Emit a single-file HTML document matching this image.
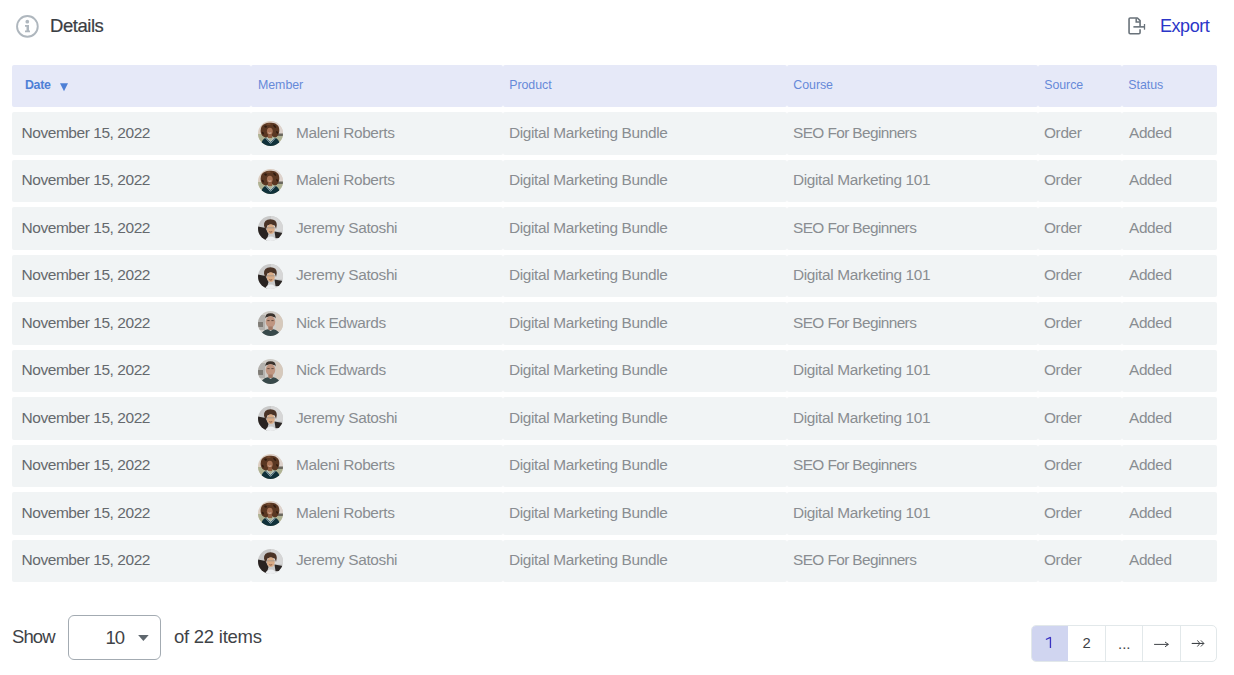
<!DOCTYPE html><html><head><meta charset="utf-8"><style>
*{box-sizing:border-box;margin:0;padding:0}
html,body{width:1234px;height:675px;overflow:hidden;background:#fff;font-family:"Liberation Sans",sans-serif}
.a{position:absolute}
.cell{position:absolute;border-radius:2px}
.h{background:#e6e9f8}
.r{background:#f1f4f5}
.t{position:absolute;white-space:nowrap;line-height:1}
.av{position:absolute;width:25px;height:25px;border-radius:50%;overflow:hidden}
</style></head><body>
<svg class="a" style="left:14px;top:13px" width="27" height="27" viewBox="0 0 27 27"><circle cx="13.4" cy="13.4" r="10.35" fill="none" stroke="#afb7be" stroke-width="1.9"/><circle cx="13.3" cy="8.7" r="1.85" fill="#afb7be"/><path d="M11.0 12.0 H15.0 V17.4 H16.0 V19.3 H11.0 V17.4 H12.5 V13.7 H11.0Z" fill="#afb7be"/></svg>
<div class="t" style="left:50px;top:17.27px;font-size:18.5px;color:#3b3e43;letter-spacing:-0.45px;-webkit-text-stroke:0.2px #3b3e43">Details</div>
<svg class="a" style="left:1124px;top:13px" width="24" height="24" viewBox="0 0 24 24"><path d="M16.07 13.87 V7.6 L13.4 5.0 H6.15 Q5.05 5.0 5.05 6.1 V19.6 Q5.05 20.7 6.15 20.7 H14.97 Q16.07 20.7 16.07 19.6 V16.3" fill="none" stroke="#69727a" stroke-width="1.6" stroke-linejoin="round"/><path d="M12.2 5.2 V8.9 H15.9" fill="none" stroke="#69727a" stroke-width="1.5"/><path d="M9.4 13.87 H20.4" fill="none" stroke="#69727a" stroke-width="1.6"/><path d="M20.5 11.0 V16.7" fill="none" stroke="#69727a" stroke-width="1.3"/></svg>
<div class="t" style="left:1160px;top:16.7px;font-size:18px;color:#2b36c8;letter-spacing:-0.45px">Export</div>
<div class="cell h" style="left:12px;top:65px;width:239px;height:42px"></div>
<div class="cell h" style="left:251px;top:65px;width:251.8px;height:42px"></div>
<div class="cell h" style="left:502.8px;top:65px;width:284.09999999999997px;height:42px"></div>
<div class="cell h" style="left:786.9px;top:65px;width:250.89999999999998px;height:42px"></div>
<div class="cell h" style="left:1037.8px;top:65px;width:84.10000000000014px;height:42px"></div>
<div class="cell h" style="left:1121.9px;top:65px;width:95.09999999999991px;height:42px"></div>
<div class="t" style="left:25px;top:79.46px;font-size:12.4px;color:#4e80d6;letter-spacing:-0.35px;font-weight:700">Date</div>
<svg class="a" style="left:59px;top:82px" width="10" height="10" viewBox="0 0 10 10"><path d="M1 1.3 H9 L5 9.3Z" fill="#4e80d6"/></svg>
<div class="t" style="left:258px;top:79.46px;font-size:12.4px;color:#6689d8;letter-spacing:-0.05px">Member</div>
<div class="t" style="left:509.2px;top:79.46px;font-size:12.4px;color:#6689d8;letter-spacing:-0.05px">Product</div>
<div class="t" style="left:793.3px;top:79.46px;font-size:12.4px;color:#6689d8;letter-spacing:-0.05px">Course</div>
<div class="t" style="left:1044.2px;top:79.46px;font-size:12.4px;color:#6689d8;letter-spacing:-0.05px">Source</div>
<div class="t" style="left:1128.3px;top:79.46px;font-size:12.4px;color:#6689d8;letter-spacing:-0.05px">Status</div>
<div class="cell r" style="left:12px;top:112px;width:239px;height:43px"></div>
<div class="cell r" style="left:251px;top:112px;width:251.8px;height:43px"></div>
<div class="cell r" style="left:502.8px;top:112px;width:284.1px;height:43px"></div>
<div class="cell r" style="left:786.9px;top:112px;width:250.9px;height:43px"></div>
<div class="cell r" style="left:1037.8px;top:112px;width:84.1px;height:43px"></div>
<div class="cell r" style="left:1121.9px;top:112px;width:95.1px;height:43px"></div>
<div class="t" style="left:21.5px;top:124.83px;font-size:15.5px;color:#65696d;letter-spacing:-0.45px">November 15, 2022</div>
<div class="av" style="left:258px;top:121.3px"><svg width="25" height="25" viewBox="0 0 25 25"><rect width="25" height="25" fill="#dccdc0"/><path d="M14 0 H25 V14 H14Z" fill="#ddd2cc"/><path d="M0 13 H25 V25 H0Z" fill="#aeb293"/><path d="M18 12.5 H25 V15 H18Z" fill="#6a675e"/><path d="M11 1.8 Q17.5 1 20.3 5 Q22.3 9 20.5 13.5 Q19.3 16.5 16 16.3 L12.8 14.5 L8 16.5 Q2.8 15.5 2.6 10 Q2.7 4 7 2.8 Q9 1.9 11 1.8Z" fill="#5a3722"/><path d="M6 5 Q8 3.8 9.2 6 Q7 8 6 5Z M15 3.8 Q18.3 4 18.2 7 Q16 7 15 3.8Z M3.8 11 Q6 10 6 13.5 Q3.8 13.5 3.8 11Z M18 10 Q20.5 10 20 13 Q18 12.5 18 10Z" fill="#2f1b10"/><path d="M8 3 Q11 2 13 3 Q11 4 8 3Z" fill="#8d5d3c"/><ellipse cx="11.8" cy="10.3" rx="2.9" ry="3.5" fill="#a97457"/><path d="M10.3 11.8 Q11.8 12.8 13.3 11.8" stroke="#e8d8cc" stroke-width="0.7" fill="none"/><path d="M10 13.3 H14 V17 H10Z" fill="#915f44"/><path d="M3 25 Q3.5 18.3 8 16.6 L12.5 20.8 L17 16.6 Q21.5 18.3 22 25Z" fill="#10313a"/><path d="M7.6 17 L12.5 22.3 L17.4 17 M9.2 16.8 L12.5 20.5 L15.8 16.8" stroke="#c8d8de" stroke-width="0.85" fill="none"/></svg></div>
<div class="t" style="left:296px;top:124.91px;font-size:15.4px;color:#898d91;letter-spacing:-0.35px">Maleni Roberts</div>
<div class="t" style="left:509px;top:124.91px;font-size:15.4px;color:#898d91;letter-spacing:-0.35px">Digital Marketing Bundle</div>
<div class="t" style="left:793px;top:124.91px;font-size:15.4px;color:#898d91;letter-spacing:-0.6px">SEO For Beginners</div>
<div class="t" style="left:1044px;top:124.91px;font-size:15.4px;color:#898d91;letter-spacing:-0.35px">Order</div>
<div class="t" style="left:1129px;top:124.91px;font-size:15.4px;color:#898d91;letter-spacing:-0.35px">Added</div>
<div class="cell r" style="left:12px;top:160px;width:239px;height:42px"></div>
<div class="cell r" style="left:251px;top:160px;width:251.8px;height:42px"></div>
<div class="cell r" style="left:502.8px;top:160px;width:284.1px;height:42px"></div>
<div class="cell r" style="left:786.9px;top:160px;width:250.9px;height:42px"></div>
<div class="cell r" style="left:1037.8px;top:160px;width:84.1px;height:42px"></div>
<div class="cell r" style="left:1121.9px;top:160px;width:95.1px;height:42px"></div>
<div class="t" style="left:21.5px;top:171.82px;font-size:15.5px;color:#65696d;letter-spacing:-0.45px">November 15, 2022</div>
<div class="av" style="left:258px;top:168.8px"><svg width="25" height="25" viewBox="0 0 25 25"><rect width="25" height="25" fill="#dccdc0"/><path d="M14 0 H25 V14 H14Z" fill="#ddd2cc"/><path d="M0 13 H25 V25 H0Z" fill="#aeb293"/><path d="M18 12.5 H25 V15 H18Z" fill="#6a675e"/><path d="M11 1.8 Q17.5 1 20.3 5 Q22.3 9 20.5 13.5 Q19.3 16.5 16 16.3 L12.8 14.5 L8 16.5 Q2.8 15.5 2.6 10 Q2.7 4 7 2.8 Q9 1.9 11 1.8Z" fill="#5a3722"/><path d="M6 5 Q8 3.8 9.2 6 Q7 8 6 5Z M15 3.8 Q18.3 4 18.2 7 Q16 7 15 3.8Z M3.8 11 Q6 10 6 13.5 Q3.8 13.5 3.8 11Z M18 10 Q20.5 10 20 13 Q18 12.5 18 10Z" fill="#2f1b10"/><path d="M8 3 Q11 2 13 3 Q11 4 8 3Z" fill="#8d5d3c"/><ellipse cx="11.8" cy="10.3" rx="2.9" ry="3.5" fill="#a97457"/><path d="M10.3 11.8 Q11.8 12.8 13.3 11.8" stroke="#e8d8cc" stroke-width="0.7" fill="none"/><path d="M10 13.3 H14 V17 H10Z" fill="#915f44"/><path d="M3 25 Q3.5 18.3 8 16.6 L12.5 20.8 L17 16.6 Q21.5 18.3 22 25Z" fill="#10313a"/><path d="M7.6 17 L12.5 22.3 L17.4 17 M9.2 16.8 L12.5 20.5 L15.8 16.8" stroke="#c8d8de" stroke-width="0.85" fill="none"/></svg></div>
<div class="t" style="left:296px;top:171.91px;font-size:15.4px;color:#898d91;letter-spacing:-0.35px">Maleni Roberts</div>
<div class="t" style="left:509px;top:171.91px;font-size:15.4px;color:#898d91;letter-spacing:-0.35px">Digital Marketing Bundle</div>
<div class="t" style="left:793px;top:171.91px;font-size:15.4px;color:#898d91;letter-spacing:-0.35px">Digital Marketing 101</div>
<div class="t" style="left:1044px;top:171.91px;font-size:15.4px;color:#898d91;letter-spacing:-0.35px">Order</div>
<div class="t" style="left:1129px;top:171.91px;font-size:15.4px;color:#898d91;letter-spacing:-0.35px">Added</div>
<div class="cell r" style="left:12px;top:207px;width:239px;height:43px"></div>
<div class="cell r" style="left:251px;top:207px;width:251.8px;height:43px"></div>
<div class="cell r" style="left:502.8px;top:207px;width:284.1px;height:43px"></div>
<div class="cell r" style="left:786.9px;top:207px;width:250.9px;height:43px"></div>
<div class="cell r" style="left:1037.8px;top:207px;width:84.1px;height:43px"></div>
<div class="cell r" style="left:1121.9px;top:207px;width:95.1px;height:43px"></div>
<div class="t" style="left:21.5px;top:219.82px;font-size:15.5px;color:#65696d;letter-spacing:-0.45px">November 15, 2022</div>
<div class="av" style="left:258px;top:216.3px"><svg width="25" height="25" viewBox="0 0 25 25"><rect width="25" height="25" fill="#c9c9c9"/><path d="M13 0 H25 V15 H13Z" fill="#d6d6d6"/><path d="M0 10.5 L7.5 12 L10.5 18 L8.5 25 H0Z" fill="#292321"/><path d="M16.5 15.5 L25 17 L25 22.5 L17.5 22Z" fill="#2b2624"/><path d="M6 9.5 Q5.5 3.5 12.5 3.2 Q19 3.5 18.8 9 L18 13 L16.8 9.5 Q13 8 9.5 9.2 L8 13.5 Q6.3 12 6 9.5Z" fill="#4a3326"/><ellipse cx="12.8" cy="13.2" rx="3.9" ry="4.9" fill="#d9ab86"/><path d="M9 11.8 H16.8" stroke="#9a948c" stroke-width="0.8"/><path d="M11.3 15.6 Q12.8 16.6 14.2 15.6" stroke="#7a4a35" stroke-width="0.8" fill="none"/><path d="M7 25 Q8.5 20.5 12.8 20.5 Q17 20.5 18.5 25Z" fill="#eceef0"/></svg></div>
<div class="t" style="left:296px;top:219.91px;font-size:15.4px;color:#898d91;letter-spacing:-0.35px">Jeremy Satoshi</div>
<div class="t" style="left:509px;top:219.91px;font-size:15.4px;color:#898d91;letter-spacing:-0.35px">Digital Marketing Bundle</div>
<div class="t" style="left:793px;top:219.91px;font-size:15.4px;color:#898d91;letter-spacing:-0.6px">SEO For Beginners</div>
<div class="t" style="left:1044px;top:219.91px;font-size:15.4px;color:#898d91;letter-spacing:-0.35px">Order</div>
<div class="t" style="left:1129px;top:219.91px;font-size:15.4px;color:#898d91;letter-spacing:-0.35px">Added</div>
<div class="cell r" style="left:12px;top:255px;width:239px;height:42px"></div>
<div class="cell r" style="left:251px;top:255px;width:251.8px;height:42px"></div>
<div class="cell r" style="left:502.8px;top:255px;width:284.1px;height:42px"></div>
<div class="cell r" style="left:786.9px;top:255px;width:250.9px;height:42px"></div>
<div class="cell r" style="left:1037.8px;top:255px;width:84.1px;height:42px"></div>
<div class="cell r" style="left:1121.9px;top:255px;width:95.1px;height:42px"></div>
<div class="t" style="left:21.5px;top:266.82px;font-size:15.5px;color:#65696d;letter-spacing:-0.45px">November 15, 2022</div>
<div class="av" style="left:258px;top:263.8px"><svg width="25" height="25" viewBox="0 0 25 25"><rect width="25" height="25" fill="#c9c9c9"/><path d="M13 0 H25 V15 H13Z" fill="#d6d6d6"/><path d="M0 10.5 L7.5 12 L10.5 18 L8.5 25 H0Z" fill="#292321"/><path d="M16.5 15.5 L25 17 L25 22.5 L17.5 22Z" fill="#2b2624"/><path d="M6 9.5 Q5.5 3.5 12.5 3.2 Q19 3.5 18.8 9 L18 13 L16.8 9.5 Q13 8 9.5 9.2 L8 13.5 Q6.3 12 6 9.5Z" fill="#4a3326"/><ellipse cx="12.8" cy="13.2" rx="3.9" ry="4.9" fill="#d9ab86"/><path d="M9 11.8 H16.8" stroke="#9a948c" stroke-width="0.8"/><path d="M11.3 15.6 Q12.8 16.6 14.2 15.6" stroke="#7a4a35" stroke-width="0.8" fill="none"/><path d="M7 25 Q8.5 20.5 12.8 20.5 Q17 20.5 18.5 25Z" fill="#eceef0"/></svg></div>
<div class="t" style="left:296px;top:266.91px;font-size:15.4px;color:#898d91;letter-spacing:-0.35px">Jeremy Satoshi</div>
<div class="t" style="left:509px;top:266.91px;font-size:15.4px;color:#898d91;letter-spacing:-0.35px">Digital Marketing Bundle</div>
<div class="t" style="left:793px;top:266.91px;font-size:15.4px;color:#898d91;letter-spacing:-0.35px">Digital Marketing 101</div>
<div class="t" style="left:1044px;top:266.91px;font-size:15.4px;color:#898d91;letter-spacing:-0.35px">Order</div>
<div class="t" style="left:1129px;top:266.91px;font-size:15.4px;color:#898d91;letter-spacing:-0.35px">Added</div>
<div class="cell r" style="left:12px;top:302px;width:239px;height:43px"></div>
<div class="cell r" style="left:251px;top:302px;width:251.8px;height:43px"></div>
<div class="cell r" style="left:502.8px;top:302px;width:284.1px;height:43px"></div>
<div class="cell r" style="left:786.9px;top:302px;width:250.9px;height:43px"></div>
<div class="cell r" style="left:1037.8px;top:302px;width:84.1px;height:43px"></div>
<div class="cell r" style="left:1121.9px;top:302px;width:95.1px;height:43px"></div>
<div class="t" style="left:21.5px;top:314.82px;font-size:15.5px;color:#65696d;letter-spacing:-0.45px">November 15, 2022</div>
<div class="av" style="left:258px;top:311.3px"><svg width="25" height="25" viewBox="0 0 25 25"><rect width="25" height="25" fill="#cfccc7"/><path d="M0 4 H7 V19 H0Z" fill="#b3b1ad"/><path d="M0 11 H5 V16 H0Z" fill="#7f7c76"/><path d="M18 3 H25 V20 H18Z" fill="#d6c9bc"/><path d="M7.3 7.5 Q7 2.3 12.5 2.3 Q18 2.3 17.7 7.5 L16.8 6.2 Q12.5 4.6 8.2 6.2Z" fill="#3a322c"/><ellipse cx="12.5" cy="10.8" rx="4.8" ry="5.8" fill="#bf9580"/><path d="M9.3 9.6 H11.6 M13.4 9.6 H15.7" stroke="#5a4438" stroke-width="0.9"/><path d="M10.3 15.5 H14.8 V19 H10.3Z" fill="#a27a66"/><path d="M2.5 25 Q4 19.5 9.8 18.3 L12.6 20 L15.4 18.3 Q21 19.5 22.5 25Z" fill="#38494a"/></svg></div>
<div class="t" style="left:296px;top:314.91px;font-size:15.4px;color:#898d91;letter-spacing:-0.35px">Nick Edwards</div>
<div class="t" style="left:509px;top:314.91px;font-size:15.4px;color:#898d91;letter-spacing:-0.35px">Digital Marketing Bundle</div>
<div class="t" style="left:793px;top:314.91px;font-size:15.4px;color:#898d91;letter-spacing:-0.6px">SEO For Beginners</div>
<div class="t" style="left:1044px;top:314.91px;font-size:15.4px;color:#898d91;letter-spacing:-0.35px">Order</div>
<div class="t" style="left:1129px;top:314.91px;font-size:15.4px;color:#898d91;letter-spacing:-0.35px">Added</div>
<div class="cell r" style="left:12px;top:350px;width:239px;height:42px"></div>
<div class="cell r" style="left:251px;top:350px;width:251.8px;height:42px"></div>
<div class="cell r" style="left:502.8px;top:350px;width:284.1px;height:42px"></div>
<div class="cell r" style="left:786.9px;top:350px;width:250.9px;height:42px"></div>
<div class="cell r" style="left:1037.8px;top:350px;width:84.1px;height:42px"></div>
<div class="cell r" style="left:1121.9px;top:350px;width:95.1px;height:42px"></div>
<div class="t" style="left:21.5px;top:361.82px;font-size:15.5px;color:#65696d;letter-spacing:-0.45px">November 15, 2022</div>
<div class="av" style="left:258px;top:358.8px"><svg width="25" height="25" viewBox="0 0 25 25"><rect width="25" height="25" fill="#cfccc7"/><path d="M0 4 H7 V19 H0Z" fill="#b3b1ad"/><path d="M0 11 H5 V16 H0Z" fill="#7f7c76"/><path d="M18 3 H25 V20 H18Z" fill="#d6c9bc"/><path d="M7.3 7.5 Q7 2.3 12.5 2.3 Q18 2.3 17.7 7.5 L16.8 6.2 Q12.5 4.6 8.2 6.2Z" fill="#3a322c"/><ellipse cx="12.5" cy="10.8" rx="4.8" ry="5.8" fill="#bf9580"/><path d="M9.3 9.6 H11.6 M13.4 9.6 H15.7" stroke="#5a4438" stroke-width="0.9"/><path d="M10.3 15.5 H14.8 V19 H10.3Z" fill="#a27a66"/><path d="M2.5 25 Q4 19.5 9.8 18.3 L12.6 20 L15.4 18.3 Q21 19.5 22.5 25Z" fill="#38494a"/></svg></div>
<div class="t" style="left:296px;top:361.91px;font-size:15.4px;color:#898d91;letter-spacing:-0.35px">Nick Edwards</div>
<div class="t" style="left:509px;top:361.91px;font-size:15.4px;color:#898d91;letter-spacing:-0.35px">Digital Marketing Bundle</div>
<div class="t" style="left:793px;top:361.91px;font-size:15.4px;color:#898d91;letter-spacing:-0.35px">Digital Marketing 101</div>
<div class="t" style="left:1044px;top:361.91px;font-size:15.4px;color:#898d91;letter-spacing:-0.35px">Order</div>
<div class="t" style="left:1129px;top:361.91px;font-size:15.4px;color:#898d91;letter-spacing:-0.35px">Added</div>
<div class="cell r" style="left:12px;top:397px;width:239px;height:43px"></div>
<div class="cell r" style="left:251px;top:397px;width:251.8px;height:43px"></div>
<div class="cell r" style="left:502.8px;top:397px;width:284.1px;height:43px"></div>
<div class="cell r" style="left:786.9px;top:397px;width:250.9px;height:43px"></div>
<div class="cell r" style="left:1037.8px;top:397px;width:84.1px;height:43px"></div>
<div class="cell r" style="left:1121.9px;top:397px;width:95.1px;height:43px"></div>
<div class="t" style="left:21.5px;top:409.82px;font-size:15.5px;color:#65696d;letter-spacing:-0.45px">November 15, 2022</div>
<div class="av" style="left:258px;top:406.3px"><svg width="25" height="25" viewBox="0 0 25 25"><rect width="25" height="25" fill="#c9c9c9"/><path d="M13 0 H25 V15 H13Z" fill="#d6d6d6"/><path d="M0 10.5 L7.5 12 L10.5 18 L8.5 25 H0Z" fill="#292321"/><path d="M16.5 15.5 L25 17 L25 22.5 L17.5 22Z" fill="#2b2624"/><path d="M6 9.5 Q5.5 3.5 12.5 3.2 Q19 3.5 18.8 9 L18 13 L16.8 9.5 Q13 8 9.5 9.2 L8 13.5 Q6.3 12 6 9.5Z" fill="#4a3326"/><ellipse cx="12.8" cy="13.2" rx="3.9" ry="4.9" fill="#d9ab86"/><path d="M9 11.8 H16.8" stroke="#9a948c" stroke-width="0.8"/><path d="M11.3 15.6 Q12.8 16.6 14.2 15.6" stroke="#7a4a35" stroke-width="0.8" fill="none"/><path d="M7 25 Q8.5 20.5 12.8 20.5 Q17 20.5 18.5 25Z" fill="#eceef0"/></svg></div>
<div class="t" style="left:296px;top:409.91px;font-size:15.4px;color:#898d91;letter-spacing:-0.35px">Jeremy Satoshi</div>
<div class="t" style="left:509px;top:409.91px;font-size:15.4px;color:#898d91;letter-spacing:-0.35px">Digital Marketing Bundle</div>
<div class="t" style="left:793px;top:409.91px;font-size:15.4px;color:#898d91;letter-spacing:-0.35px">Digital Marketing 101</div>
<div class="t" style="left:1044px;top:409.91px;font-size:15.4px;color:#898d91;letter-spacing:-0.35px">Order</div>
<div class="t" style="left:1129px;top:409.91px;font-size:15.4px;color:#898d91;letter-spacing:-0.35px">Added</div>
<div class="cell r" style="left:12px;top:445px;width:239px;height:42px"></div>
<div class="cell r" style="left:251px;top:445px;width:251.8px;height:42px"></div>
<div class="cell r" style="left:502.8px;top:445px;width:284.1px;height:42px"></div>
<div class="cell r" style="left:786.9px;top:445px;width:250.9px;height:42px"></div>
<div class="cell r" style="left:1037.8px;top:445px;width:84.1px;height:42px"></div>
<div class="cell r" style="left:1121.9px;top:445px;width:95.1px;height:42px"></div>
<div class="t" style="left:21.5px;top:456.82px;font-size:15.5px;color:#65696d;letter-spacing:-0.45px">November 15, 2022</div>
<div class="av" style="left:258px;top:453.8px"><svg width="25" height="25" viewBox="0 0 25 25"><rect width="25" height="25" fill="#dccdc0"/><path d="M14 0 H25 V14 H14Z" fill="#ddd2cc"/><path d="M0 13 H25 V25 H0Z" fill="#aeb293"/><path d="M18 12.5 H25 V15 H18Z" fill="#6a675e"/><path d="M11 1.8 Q17.5 1 20.3 5 Q22.3 9 20.5 13.5 Q19.3 16.5 16 16.3 L12.8 14.5 L8 16.5 Q2.8 15.5 2.6 10 Q2.7 4 7 2.8 Q9 1.9 11 1.8Z" fill="#5a3722"/><path d="M6 5 Q8 3.8 9.2 6 Q7 8 6 5Z M15 3.8 Q18.3 4 18.2 7 Q16 7 15 3.8Z M3.8 11 Q6 10 6 13.5 Q3.8 13.5 3.8 11Z M18 10 Q20.5 10 20 13 Q18 12.5 18 10Z" fill="#2f1b10"/><path d="M8 3 Q11 2 13 3 Q11 4 8 3Z" fill="#8d5d3c"/><ellipse cx="11.8" cy="10.3" rx="2.9" ry="3.5" fill="#a97457"/><path d="M10.3 11.8 Q11.8 12.8 13.3 11.8" stroke="#e8d8cc" stroke-width="0.7" fill="none"/><path d="M10 13.3 H14 V17 H10Z" fill="#915f44"/><path d="M3 25 Q3.5 18.3 8 16.6 L12.5 20.8 L17 16.6 Q21.5 18.3 22 25Z" fill="#10313a"/><path d="M7.6 17 L12.5 22.3 L17.4 17 M9.2 16.8 L12.5 20.5 L15.8 16.8" stroke="#c8d8de" stroke-width="0.85" fill="none"/></svg></div>
<div class="t" style="left:296px;top:456.91px;font-size:15.4px;color:#898d91;letter-spacing:-0.35px">Maleni Roberts</div>
<div class="t" style="left:509px;top:456.91px;font-size:15.4px;color:#898d91;letter-spacing:-0.35px">Digital Marketing Bundle</div>
<div class="t" style="left:793px;top:456.91px;font-size:15.4px;color:#898d91;letter-spacing:-0.6px">SEO For Beginners</div>
<div class="t" style="left:1044px;top:456.91px;font-size:15.4px;color:#898d91;letter-spacing:-0.35px">Order</div>
<div class="t" style="left:1129px;top:456.91px;font-size:15.4px;color:#898d91;letter-spacing:-0.35px">Added</div>
<div class="cell r" style="left:12px;top:492px;width:239px;height:43px"></div>
<div class="cell r" style="left:251px;top:492px;width:251.8px;height:43px"></div>
<div class="cell r" style="left:502.8px;top:492px;width:284.1px;height:43px"></div>
<div class="cell r" style="left:786.9px;top:492px;width:250.9px;height:43px"></div>
<div class="cell r" style="left:1037.8px;top:492px;width:84.1px;height:43px"></div>
<div class="cell r" style="left:1121.9px;top:492px;width:95.1px;height:43px"></div>
<div class="t" style="left:21.5px;top:504.82px;font-size:15.5px;color:#65696d;letter-spacing:-0.45px">November 15, 2022</div>
<div class="av" style="left:258px;top:501.3px"><svg width="25" height="25" viewBox="0 0 25 25"><rect width="25" height="25" fill="#dccdc0"/><path d="M14 0 H25 V14 H14Z" fill="#ddd2cc"/><path d="M0 13 H25 V25 H0Z" fill="#aeb293"/><path d="M18 12.5 H25 V15 H18Z" fill="#6a675e"/><path d="M11 1.8 Q17.5 1 20.3 5 Q22.3 9 20.5 13.5 Q19.3 16.5 16 16.3 L12.8 14.5 L8 16.5 Q2.8 15.5 2.6 10 Q2.7 4 7 2.8 Q9 1.9 11 1.8Z" fill="#5a3722"/><path d="M6 5 Q8 3.8 9.2 6 Q7 8 6 5Z M15 3.8 Q18.3 4 18.2 7 Q16 7 15 3.8Z M3.8 11 Q6 10 6 13.5 Q3.8 13.5 3.8 11Z M18 10 Q20.5 10 20 13 Q18 12.5 18 10Z" fill="#2f1b10"/><path d="M8 3 Q11 2 13 3 Q11 4 8 3Z" fill="#8d5d3c"/><ellipse cx="11.8" cy="10.3" rx="2.9" ry="3.5" fill="#a97457"/><path d="M10.3 11.8 Q11.8 12.8 13.3 11.8" stroke="#e8d8cc" stroke-width="0.7" fill="none"/><path d="M10 13.3 H14 V17 H10Z" fill="#915f44"/><path d="M3 25 Q3.5 18.3 8 16.6 L12.5 20.8 L17 16.6 Q21.5 18.3 22 25Z" fill="#10313a"/><path d="M7.6 17 L12.5 22.3 L17.4 17 M9.2 16.8 L12.5 20.5 L15.8 16.8" stroke="#c8d8de" stroke-width="0.85" fill="none"/></svg></div>
<div class="t" style="left:296px;top:504.91px;font-size:15.4px;color:#898d91;letter-spacing:-0.35px">Maleni Roberts</div>
<div class="t" style="left:509px;top:504.91px;font-size:15.4px;color:#898d91;letter-spacing:-0.35px">Digital Marketing Bundle</div>
<div class="t" style="left:793px;top:504.91px;font-size:15.4px;color:#898d91;letter-spacing:-0.35px">Digital Marketing 101</div>
<div class="t" style="left:1044px;top:504.91px;font-size:15.4px;color:#898d91;letter-spacing:-0.35px">Order</div>
<div class="t" style="left:1129px;top:504.91px;font-size:15.4px;color:#898d91;letter-spacing:-0.35px">Added</div>
<div class="cell r" style="left:12px;top:540px;width:239px;height:42px"></div>
<div class="cell r" style="left:251px;top:540px;width:251.8px;height:42px"></div>
<div class="cell r" style="left:502.8px;top:540px;width:284.1px;height:42px"></div>
<div class="cell r" style="left:786.9px;top:540px;width:250.9px;height:42px"></div>
<div class="cell r" style="left:1037.8px;top:540px;width:84.1px;height:42px"></div>
<div class="cell r" style="left:1121.9px;top:540px;width:95.1px;height:42px"></div>
<div class="t" style="left:21.5px;top:551.83px;font-size:15.5px;color:#65696d;letter-spacing:-0.45px">November 15, 2022</div>
<div class="av" style="left:258px;top:548.8px"><svg width="25" height="25" viewBox="0 0 25 25"><rect width="25" height="25" fill="#c9c9c9"/><path d="M13 0 H25 V15 H13Z" fill="#d6d6d6"/><path d="M0 10.5 L7.5 12 L10.5 18 L8.5 25 H0Z" fill="#292321"/><path d="M16.5 15.5 L25 17 L25 22.5 L17.5 22Z" fill="#2b2624"/><path d="M6 9.5 Q5.5 3.5 12.5 3.2 Q19 3.5 18.8 9 L18 13 L16.8 9.5 Q13 8 9.5 9.2 L8 13.5 Q6.3 12 6 9.5Z" fill="#4a3326"/><ellipse cx="12.8" cy="13.2" rx="3.9" ry="4.9" fill="#d9ab86"/><path d="M9 11.8 H16.8" stroke="#9a948c" stroke-width="0.8"/><path d="M11.3 15.6 Q12.8 16.6 14.2 15.6" stroke="#7a4a35" stroke-width="0.8" fill="none"/><path d="M7 25 Q8.5 20.5 12.8 20.5 Q17 20.5 18.5 25Z" fill="#eceef0"/></svg></div>
<div class="t" style="left:296px;top:551.91px;font-size:15.4px;color:#898d91;letter-spacing:-0.35px">Jeremy Satoshi</div>
<div class="t" style="left:509px;top:551.91px;font-size:15.4px;color:#898d91;letter-spacing:-0.35px">Digital Marketing Bundle</div>
<div class="t" style="left:793px;top:551.91px;font-size:15.4px;color:#898d91;letter-spacing:-0.6px">SEO For Beginners</div>
<div class="t" style="left:1044px;top:551.91px;font-size:15.4px;color:#898d91;letter-spacing:-0.35px">Order</div>
<div class="t" style="left:1129px;top:551.91px;font-size:15.4px;color:#898d91;letter-spacing:-0.35px">Added</div>
<div class="t" style="left:12px;top:628.27px;font-size:18.5px;color:#3f4347;letter-spacing:-0.9px">Show</div>
<div class="a" style="left:68px;top:615px;width:92.5px;height:45px;border:1px solid #a3abb2;border-radius:6px"></div>
<div class="t" style="left:105.5px;top:629.27px;font-size:18.5px;color:#3f4347;letter-spacing:-1.0px">10</div>
<svg class="a" style="left:137px;top:633px" width="13" height="10" viewBox="0 0 13 10"><path d="M1.1 1.9 H11.7 L6.4 8.0Z" fill="#5f676e"/></svg>
<div class="t" style="left:174px;top:628.27px;font-size:18.5px;color:#3f4347;letter-spacing:-0.25px">of 22 items</div>
<div class="a" style="left:1030.5px;top:625px;width:186.5px;height:36.5px;border:1px solid #e2e8ea;border-radius:5px;overflow:hidden"><div style="position:absolute;left:0;top:0;width:36.4px;height:100%;background:#d0d5f0"></div></div>
<div class="a" style="left:1104.8px;top:626px;width:1px;height:34.5px;background:#e2e8ea"></div>
<div class="a" style="left:1141.8px;top:626px;width:1px;height:34.5px;background:#e2e8ea"></div>
<div class="a" style="left:1179.7px;top:626px;width:1px;height:34.5px;background:#e2e8ea"></div>
<svg class="a" style="left:1040px;top:632px" width="16" height="20" viewBox="0 0 16 20"><path d="M5.9 7.5 L10.45 5.3 V16" fill="none" stroke="#3b32c2" stroke-width="1.3" stroke-linejoin="bevel"/></svg>
<div class="t" style="left:1082.5px;top:636.42px;font-size:14.8px;color:#3f4347">2</div>
<div class="t" style="left:1118px;top:636.25px;font-size:15px;color:#3f4347">...</div>
<svg class="a" style="left:1150px;top:636px" width="24" height="16" viewBox="0 0 24 16"><path d="M4.1 8.4 H18.3" stroke="#3f4347" stroke-width="1"/><path d="M15 6 L18.4 8.4 L15 10.8" fill="none" stroke="#3f4347" stroke-width="1"/></svg>
<svg class="a" style="left:1188px;top:636px" width="24" height="16" viewBox="0 0 24 16"><path d="M3.7 7.45 H15.9" stroke="#3f4347" stroke-width="1.1"/><path d="M9.4 4.4 L11.9 7.45 L9.4 10.5 M12.9 4.4 L15.9 7.45 L12.9 10.5" fill="none" stroke="#3f4347" stroke-width="0.95"/></svg>
</body></html>
